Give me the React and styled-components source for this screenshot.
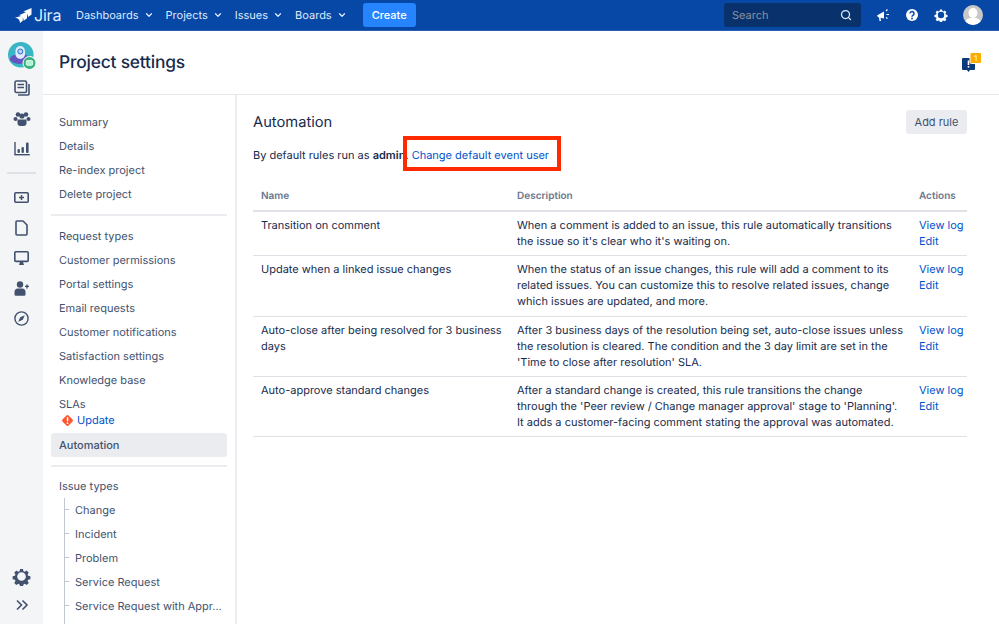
import React from 'react';
import styled, { createGlobalStyle } from 'styled-components';
import { FiChevronDown, FiSearch } from 'react-icons/fi';

const Global = createGlobalStyle`
  html, body {
    margin: 0;
    height: 624px;
    overflow: hidden;
    background: #fff;
    font-family: Inter, "Liberation Sans", sans-serif;
    font-size: 11px;
    color: #172b4d;
    text-rendering: geometricPrecision;
  }
  * { box-sizing: border-box; }
`;

const settingsGroups = [
  ['Summary', 'Details', 'Re-index project', 'Delete project'],
  ['Request types', 'Customer permissions', 'Portal settings', 'Email requests', 'Customer notifications', 'Satisfaction settings', 'Knowledge base']
];

const issueTypes = ['Change', 'Incident', 'Problem', 'Service Request', 'Service Request with Appr...'];

const rules = [
  {
    name: 'Transition on comment',
    lines: ['When a comment is added to an issue, this rule automatically transitions', "the issue so it's clear who it's waiting on."]
  },
  {
    name: 'Update when a linked issue changes',
    lines: [
      'When the status of an issue changes, this rule will add a comment to its',
      'related issues. You can customize this to resolve related issues, change',
      'which issues are updated, and more.'
    ]
  },
  {
    name: 'Auto-close after being resolved for 3 business days',
    lines: [
      'After 3 business days of the resolution being set, auto-close issues unless',
      'the resolution is cleared. The condition and the 3 day limit are set in the',
      "'Time to close after resolution' SLA."
    ]
  },
  {
    name: 'Auto-approve standard changes',
    lines: [
      'After a standard change is created, this rule transitions the change',
      "through the 'Peer review / Change manager approval' stage to 'Planning'.",
      'It adds a customer-facing comment stating the approval was automated.'
    ]
  }
];

const Page = styled.div`
  position: relative;
  width: 999px;
  height: 624px;
  overflow: hidden;
  display: flex;
  flex-direction: column;
`;

const TopBar = styled.header`
  height: 31px;
  flex: none;
  background: #0747a6;
  border-bottom: 1px solid #2a5fb0;
  display: flex;
  align-items: center;
  padding: 0 16px 0 15px;
`;

const Logo = styled.div`
  display: flex;
  align-items: center;
  gap: 2px;
  width: 61px;
  color: #deebff;
  font-size: 16px;
  letter-spacing: -0.2px;
`;

const NavLink = styled.div`
  display: flex;
  align-items: center;
  gap: 5px;
  color: #deebff;
  font-size: 11px;
  margin-right: 12px;
`;

const CreateButton = styled.button`
  height: 24px;
  width: 53px;
  margin-left: 4px;
  border: 0;
  border-radius: 3px;
  background: #2684ff;
  color: #fff;
  font: 500 11px Inter, sans-serif;
  padding: 0;
`;

const SearchBox = styled.div`
  margin-left: auto;
  width: 137px;
  height: 24px;
  border-radius: 3px;
  background: #09326c;
  color: #8993a4;
  display: flex;
  align-items: center;
  justify-content: space-between;
  padding: 0 9px 0 8px;
  margin-right: 16px;
`;

const TopIcons = styled.div`
  display: flex;
  align-items: center;
  gap: 15px;
  svg { display: block; }
`;

const Body = styled.div`
  flex: 1;
  display: flex;
  min-height: 0;
`;

const Rail = styled.aside`
  width: 43px;
  flex: none;
  background: #f4f5f7;
  display: flex;
  flex-direction: column;
  align-items: center;
  padding-top: 11px;
`;

const ProjectAvatar = styled.svg`
  margin-left: 1px;
  margin-bottom: 3px;
  flex: none;
`;

const RailButton = styled.div`
  height: 30.4px;
  display: flex;
  align-items: center;
  justify-content: center;
  color: #42526e;
`;

const RailRule = styled.div`
  width: 29px;
  height: 2px;
  background: #dfe1e6;
  margin: 8px 0 8px;
`;

const RailBottom = styled.div`
  margin-top: auto;
  display: flex;
  flex-direction: column;
  align-items: center;
  gap: 13px;
  padding-bottom: 13px;
`;

const Content = styled.div`
  flex: 1;
  min-width: 0;
  display: flex;
  flex-direction: column;
`;

const PageHeader = styled.div`
  height: 64px;
  flex: none;
  border-bottom: 1px solid #e6e8ec;
  display: flex;
  align-items: center;
  justify-content: space-between;
  padding: 0 18px 0 16px;
`;

const PageTitle = styled.h1`
  margin: 0;
  font-size: 17.4px;
  font-weight: 500;
  letter-spacing: -0.2px;
`;

const Columns = styled.div`
  flex: 1;
  display: flex;
  min-height: 0;
`;

const SettingsNav = styled.nav`
  width: 194px;
  flex: none;
  border-right: 2px solid #ebecf0;
  padding: 15px 8px 0;
  overflow: hidden;
`;

const NavItem = styled.div`
  height: 24px;
  display: flex;
  align-items: center;
  padding-left: 8px;
  color: #42526e;
  font-weight: ${(p) => (p.$active ? 500 : 400)};
  background: ${(p) => (p.$active ? '#ebecf0' : 'transparent')};
  border-radius: 3px;
  white-space: nowrap;
`;

const NavRule = styled.div`
  height: 2px;
  background: #ebecf0;
  margin: ${(p) => p.$margin || '8px 0'};
`;

const SlaBlock = styled.div`
  padding: 4px 0 4px 8px;
  color: #42526e;
  line-height: 16px;
  margin-bottom: 1px;
`;

const UpdateRow = styled.div`
  display: flex;
  align-items: center;
  gap: 3px;
  color: #0052cc;
  margin-left: 2px;
`;

const IssueTree = styled.div`
  position: relative;
  margin-left: 13px;
  border-left: 1px solid #c1c7d0;
`;

const IssueItem = styled.div`
  height: 24px;
  display: flex;
  align-items: center;
  color: #42526e;
  white-space: nowrap;

  &::before {
    content: '';
    flex: none;
    width: 4px;
    height: 1px;
    background: #c1c7d0;
    margin-right: 6px;
  }
`;

const Main = styled.main`
  flex: 1;
  min-width: 0;
  padding: 15px 32px 0 16px;
`;

const MainHead = styled.div`
  display: flex;
  justify-content: space-between;
  align-items: center;
  height: 24px;
`;

const SectionTitle = styled.h2`
  margin: 0;
  font-size: 14.7px;
  font-weight: 400;
`;

const AddButton = styled.button`
  width: 61px;
  height: 24px;
  border: 0;
  border-radius: 3px;
  background: #ebecf0;
  color: #42526e;
  font: 400 11px Inter, sans-serif;
  padding: 0;
`;

const Intro = styled.p`
  margin: 13px 0 0;
  line-height: 16px;
  color: #172b4d;
  b { font-weight: 600; }
`;

const Link = styled.a`
  color: #0052cc;
  display: ${(p) => (p.$block ? 'block' : 'inline')};
  white-space: nowrap;
`;

const RulesTable = styled.table`
  width: 100%;
  margin-top: 19px;
  border-collapse: collapse;
  table-layout: fixed;

  th {
    height: 29px;
    text-align: left;
    color: #6b778c;
    font-size: 10px;
    font-weight: 600;
    padding: 0 8px;
    border-bottom: 2px solid #dfe1e6;
  }

  td {
    vertical-align: top;
    padding: 5px 8px 6.3px;
    line-height: 16px;
    border-bottom: 1px solid #dfe1e6;
  }

  td:first-child {
    padding-right: 0;
  }
`;

const Frame = styled.div`
  position: absolute;
  left: 403px;
  top: 136px;
  width: 158px;
  height: 35px;
  border: 4px solid #ff2a00;
`;

const Alert = () => (
  <svg width="13" height="13" viewBox="0 0 13 13">
    <rect x="2.2" y="2.2" width="8.6" height="8.6" rx="1.5" transform="rotate(45 6.5 6.5)" fill="#ff5630" />
    <rect x="5.8" y="3" width="1.5" height="4.5" rx=".7" fill="#fff" />
    <circle cx="6.5" cy="9.2" r=".9" fill="#fff" />
  </svg>
);

const Gear = ({ size = 14, color = '#fff' }) => (
  <svg width={size} height={size} viewBox="0 0 24 24">
    <path
      fill={color}
      fillRule="evenodd"
      d="M10 1.5h4l.7 3.1 1.800.8 2.700-1.700 2.900 2.900-1.700 2.700.8 1.800 3.100.7v4l-3.100.7-.8 1.800 1.700 2.700-2.900 2.900-2.700-1.700-1.800.8-.7 3.100h-4l-.7-3.100-1.800-.8-2.700 1.700-2.900-2.900 1.700-2.700-.8-1.800-3.100-.7v-4l3.100-.7.8-1.800-1.700-2.700 2.900-2.900 2.700 1.700 1.800-.8zM12 6a6 6 0 1 0 0 12 6 6 0 0 0 0-12z"
      transform="translate(1.100 1.100) scale(.91)"
    />
  </svg>
);

const railIcons = [
  <svg width="16" height="16" viewBox="0 0 16 16" fill="none" stroke="#42526e" strokeWidth="1.6"><rect x="1" y="1" width="11.5" height="11.5" rx="1.5" /><path d="M3.5 4.5h6.5M3.5 7.5h6.5M15 4v10a1 1 0 0 1-1 1H4" /></svg>,
  <svg width="18" height="16" viewBox="0 0 18 16" fill="#42526e"><circle cx="5" cy="3.500" r="2.300" /><circle cx="13" cy="3.500" r="2.300" /><circle cx="9" cy="5" r="2.600" /><circle cx="2.500" cy="8" r="2" /><circle cx="15.500" cy="8" r="2" /><path d="M4.500 8.500h9v3.500a3 3 0 0 1-3 3h-3a3 3 0 0 1-3-3z" /></svg>,
  <svg width="16" height="15" viewBox="0 0 16 15" fill="#42526e"><rect x="0.300" y="1" width="1.400" height="12" /><rect x="0.300" y="13" width="15.500" height="1.400" /><rect x="3.500" y="8" width="2.400" height="4" rx="1" /><rect x="7.500" y="6" width="2.400" height="6" rx="1" /><rect x="12" y="1.500" width="2.600" height="10.500" rx="1" /></svg>,
  null,
  <svg width="15" height="11" viewBox="0 0 15 11"><rect x=".8" y=".8" width="13.400" height="9.400" rx="1" fill="none" stroke="#42526e" strokeWidth="1.600" /><path d="M7.500 3v5M5 5.500h5" stroke="#42526e" strokeWidth="1.500" /></svg>,
  <svg width="13" height="16" viewBox="0 0 13 16" fill="none" stroke="#42526e" strokeWidth="1.600" strokeLinejoin="round"><path d="M1 2a1 1 0 0 1 1-1h6l4 4v9a1 1 0 0 1-1 1H2a1 1 0 0 1-1-1z" /></svg>,
  <svg width="15" height="15" viewBox="0 0 15 15"><rect x=".8" y=".8" width="13.400" height="9.600" rx="1" fill="none" stroke="#42526e" strokeWidth="1.600" /><path d="M6 11h3l1 3H5z" fill="#42526e" /></svg>,
  <svg width="15" height="15" viewBox="0 0 15 15" fill="#42526e"><circle cx="6" cy="3.500" r="3.200" /><path d="M.5 11a3.500 3.500 0 0 1 3.500-3.500h4a3.500 3.500 0 0 1 3.500 3.500v2.500a1.300 1.300 0 0 1-1.300 1.300H1.800A1.300 1.300 0 0 1 .5 13.500z" /><path d="M11 4.700h4v1.400h-4zM12.300 3.400h1.400v4h-1.400z" /></svg>,
  <svg width="15" height="15" viewBox="0 0 15 15"><circle cx="7.500" cy="7.500" r="6.600" fill="none" stroke="#42526e" strokeWidth="1.400" /><path d="M10.800 4.200 8.800 8.800 4.200 10.800 6.200 6.200z" fill="#42526e" /></svg>
];

export default function App() {
  return (
    <Page>
      <Global />
      <TopBar>
        <Logo>
          <svg width="17" height="15" viewBox="0 0 17 15" fill="#fff">
            <path d="M16.500 0v6.500L13 9c0-3-1.500-5.200-4.700-5.500z" />
            <path d="M12 3.800v6.400l-3.300 2.500c0-3-1.700-5.200-4.800-5.500z" />
            <path d="M7.800 7.500v5.300L5 15c0-3-2-5-5-5.200z" />
          </svg>
          Jira
        </Logo>
        <NavLink>Dashboards <FiChevronDown size={10} strokeWidth={3} /></NavLink>
        <NavLink>Projects <FiChevronDown size={10} strokeWidth={3} /></NavLink>
        <NavLink>Issues <FiChevronDown size={10} strokeWidth={3} /></NavLink>
        <NavLink>Boards <FiChevronDown size={10} strokeWidth={3} /></NavLink>
        <CreateButton>Create</CreateButton>
        <SearchBox>
          Search
          <FiSearch size={12} color="#deebff" strokeWidth={2.5} />
        </SearchBox>
        <TopIcons>
          <svg width="13" height="13" viewBox="0 0 13 13" fill="#fff"><path d="M0 6.500 7 2.500v7L3.500 8.800 4 12H2.500L2 8.300H1z" /><path d="M9 2 10.500.5M9.500 5.500h2.500M9 8.500l1.500 1" stroke="#fff" strokeWidth="1.200" /></svg>
          <svg width="14" height="14" viewBox="0 0 14 14"><circle cx="7" cy="7" r="6" fill="#fff" /><path d="M5 5.500a2 2 0 1 1 3.100 1.700c-.8.500-1.100.9-1.100 1.500" fill="none" stroke="#0747a6" strokeWidth="1.500" /><circle cx="7" cy="10.500" r=".9" fill="#0747a6" /></svg>
          <Gear />
          <svg width="20" height="20" viewBox="0 0 20 20"><defs><clipPath id="avatar"><circle cx="10" cy="10" r="10" /></clipPath></defs><circle cx="10" cy="10" r="10" fill="#c8c8c8" /><g clipPath="url(#avatar)" fill="#fff"><ellipse cx="10" cy="8" rx="4.500" ry="5" /><ellipse cx="10" cy="18" rx="8" ry="5.500" /></g></svg>
        </TopIcons>
      </TopBar>
      <Body>
        <Rail>
          <ProjectAvatar width="28" height="28" viewBox="0 0 28 28">
            <defs><clipPath id="project"><circle cx="12.800" cy="12.800" r="12.800" /></clipPath></defs>
            <circle cx="12.800" cy="12.800" r="12.800" fill="#39b5c4" />
            <g clipPath="url(#project)">
              <ellipse cx="12" cy="17" rx="10" ry="5" fill="#6554c0" />
            </g>
            <rect x="7.500" y="4" width="9.500" height="13" rx="4.700" fill="#deebff" />
            <circle cx="12.300" cy="9.500" r="2.500" fill="#b3d4ff" stroke="#2a6fb5" />
            <circle cx="21.500" cy="21" r="6.500" fill="#36b37e" stroke="#fff" />
            <rect x="18.300" y="18.500" width="6.400" height="4.800" rx="1" fill="#abf5d1" stroke="#fff" strokeWidth=".8" />
          </ProjectAvatar>
          {railIcons.map((icon, i) => (icon ? <RailButton key={i}>{icon}</RailButton> : <RailRule key={i} />))}
          <RailBottom>
            <Gear size={19} color="#42526e" />
            <svg width="14" height="12" viewBox="0 0 14 12" fill="none" stroke="#42526e" strokeWidth="1.600"><path d="M2 1.500 6.500 6 2 10.500M7.500 1.500 12 6l-4.500 4.500" /></svg>
          </RailBottom>
        </Rail>
        <Content>
          <PageHeader>
            <PageTitle>Project settings</PageTitle>
            <svg width="19" height="19" viewBox="0 0 19 19">
              <path d="M1 5h11a1 1 0 0 1 1 1v10a1 1 0 0 1-1 1H8l-1.500 2-1.500-2H1a1 1 0 0 1-1-1V6a1 1 0 0 1 1-1z" fill="#0b3a7a" />
              <rect x="5.700" y="7.500" width="1.600" height="4.500" fill="#fff" />
              <rect x="5.700" y="13" width="1.600" height="1.600" fill="#fff" />
              <rect x="8" y="-.5" width="11.500" height="11" rx="1.500" fill="#ffab00" stroke="#fff" />
              <text x="13.700" y="8" fontSize="8" fill="#fff" textAnchor="middle" fontFamily="Inter">1</text>
            </svg>
          </PageHeader>
          <Columns>
            <SettingsNav>
              {settingsGroups.map((items, g) => (
                <React.Fragment key={g}>
                  {items.map((item) => <NavItem key={item}>{item}</NavItem>)}
                  {g === 0 && <NavRule />}
                </React.Fragment>
              ))}
              <SlaBlock>
                SLAs
                <UpdateRow><Alert /> Update</UpdateRow>
              </SlaBlock>
              <NavItem $active>Automation</NavItem>
              <NavRule $margin="8px 0 6.5px" />
              <NavItem>Issue types</NavItem>
              <IssueTree>
                {issueTypes.map((item) => <IssueItem key={item}>{item}</IssueItem>)}
                <IssueItem />
              </IssueTree>
            </SettingsNav>
            <Main>
              <MainHead>
                <SectionTitle>Automation</SectionTitle>
                <AddButton>Add rule</AddButton>
              </MainHead>
              <Intro>By default rules run as <b>admin</b>. <Link>Change default event user</Link></Intro>
              <RulesTable>
                <colgroup>
                  <col style={{ width: 256 }} />
                  <col style={{ width: 402 }} />
                  <col />
                </colgroup>
                <thead>
                  <tr><th>Name</th><th>Description</th><th>Actions</th></tr>
                </thead>
                <tbody>
                  {rules.map((rule) => (
                    <tr key={rule.name}>
                      <td>{rule.name}</td>
                      <td>{rule.lines.map((line) => <div key={line}>{line}</div>)}</td>
                      <td><Link $block>View log</Link><Link $block>Edit</Link></td>
                    </tr>
                  ))}
                </tbody>
              </RulesTable>
            </Main>
          </Columns>
        </Content>
      </Body>
      <Frame />
    </Page>
  );
}
